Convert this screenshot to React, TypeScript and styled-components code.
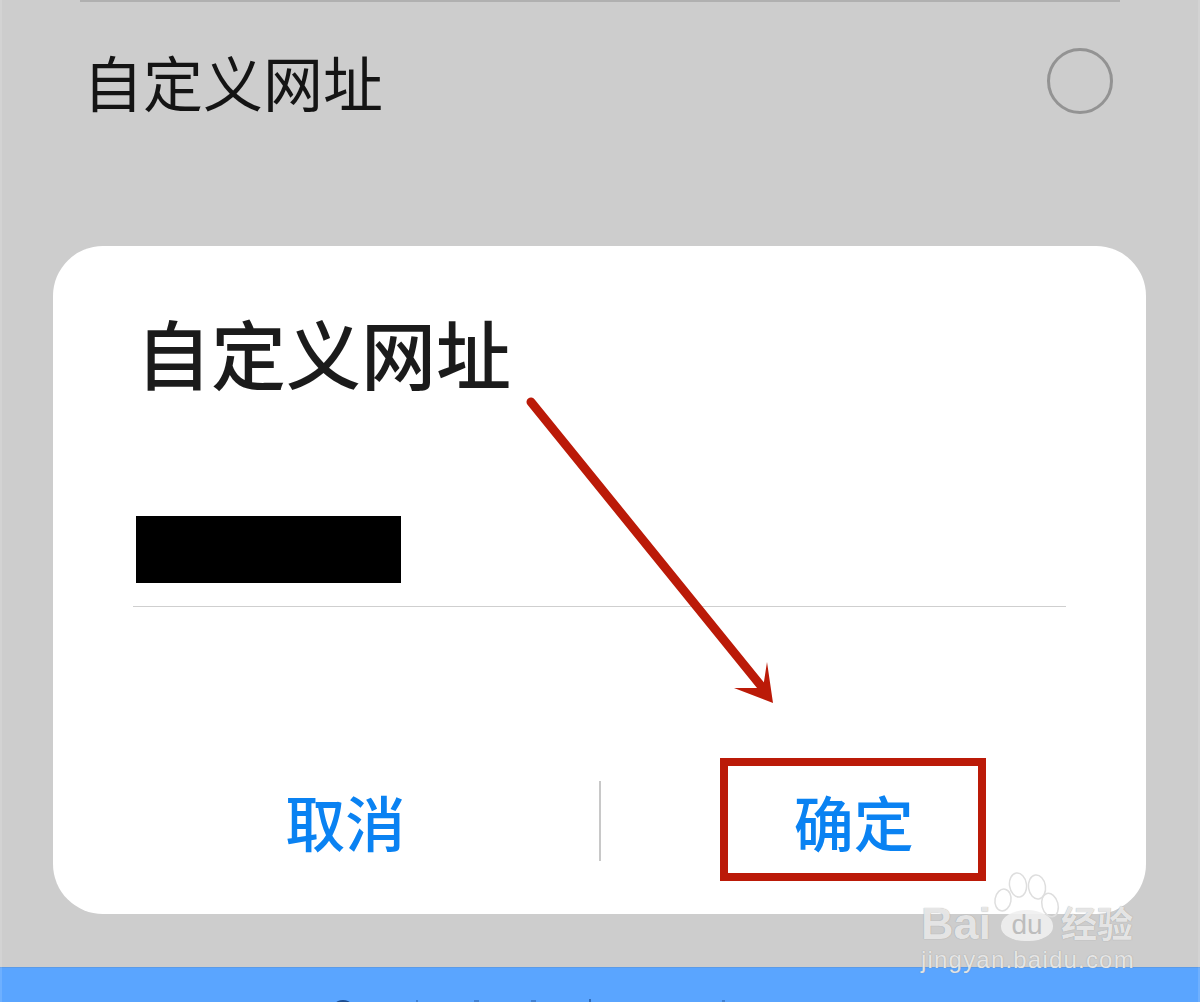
import styled, { createGlobalStyle } from "styled-components";

const GlobalStyle = createGlobalStyle`
	html, body {
		margin: 0;
		padding: 0;
	}

	body {
		font-family: "Noto Sans CJK SC", "Liberation Sans", sans-serif;
	}
`;

const Screen = styled.div`
	position: relative;
	width: 1200px;
	height: 1002px;
	overflow: hidden;
	background: #cdcdcd;
	display: flex;
	flex-direction: column;

	&::after {
		content: "";
		position: absolute;
		inset: 0;
		border-left: 2px solid rgba(255, 255, 255, 0.12);
		border-right: 2px solid rgba(255, 255, 255, 0.12);
		pointer-events: none;
	}
`;

const OptionSection = styled.section`
	height: 246px;
	padding: 0 80px;
	box-sizing: border-box;
`;

const TopRule = styled.div`
	height: 2px;
	background: #b0b0b0;
`;

const OptionRow = styled.div`
	display: flex;
	align-items: center;
	justify-content: space-between;
	height: 160px;
	padding: 0 7px 2px 3px;
	box-sizing: border-box;
`;

const OptionLabel = styled.span`
	font-size: 60px;
	line-height: 1;
	color: #141414;
`;

const Radio = styled.span`
	width: 66px;
	height: 66px;
	box-sizing: border-box;
	border: 3px solid #939393;
	border-radius: 50%;
`;

const Dialog = styled.section`
	margin: 0 54px 0 53px;
	height: 668px;
	padding: 67px 80px 0;
	box-sizing: border-box;
	background: #fff;
	border-radius: 50px;
	display: flex;
	flex-direction: column;
`;

const DialogTitle = styled.h2`
	margin: 0 0 0 3px;
	font-size: 75px;
	line-height: 78px;
	font-weight: 500;
	color: #1b1b1b;
`;

const RedactedValue = styled.div`
	margin: 125px 0 0 3px;
	width: 265px;
	height: 67px;
	background: #000;
`;

const InputRule = styled.div`
	margin-top: 23px;
	height: 1px;
	background: #cfcfcf;
`;

const Actions = styled.div`
	margin: 174px -41px 0;
	display: flex;
	align-items: center;
	height: 80px;
`;

const ActionButton = styled.button`
	flex: 1;
	border: 0;
	padding: 0;
	background: none;
	font-family: inherit;
	font-size: 60px;
	line-height: 80px;
	font-weight: 500;
	color: #0a82f2;
`;

const ActionDivider = styled.div`
	width: 2px;
	height: 80px;
	background: #c8c8c8;
`;

const BottomBar = styled.div`
	position: relative;
	margin-top: 53px;
	flex: 1;
	background: #5aa5ff;
	border-top: 1px solid #5b9be8;
`;

const CroppedGlyphTops = styled.svg`
	position: absolute;
	left: 330px;
	bottom: 0;
`;

const Highlight = styled.div`
	position: absolute;
	left: 720px;
	top: 758px;
	width: 266px;
	height: 123px;
	box-sizing: border-box;
	border: 8px solid #bb1a08;
`;

const ArrowSvg = styled.svg`
	position: absolute;
	left: 500px;
	top: 380px;
`;

const Watermark = styled.div`
	position: absolute;
	left: 921px;
	top: 872px;
	width: 220px;
	color: rgba(240, 240, 240, 0.9);
	text-shadow: 0 0 1px rgba(130, 130, 130, 0.8);
`;

const WatermarkBrand = styled.div`
	display: flex;
	align-items: center;
	height: 70px;
	padding-top: 32px;
	box-sizing: border-box;
	font-family: "Liberation Sans", sans-serif;
	font-size: 45px;
	font-weight: 700;
	line-height: 1;
`;

const PawBody = styled.span`
	display: flex;
	align-items: center;
	justify-content: center;
	flex: none;
	width: 52px;
	height: 31px;
	margin: 4px 8px 0 10px;
	border-radius: 50% 50% 46% 46%;
	background: rgba(240, 240, 240, 0.9);
	color: #bdbdbd;
	text-shadow: none;
	font-size: 28px;
	font-weight: 400;
`;

const WatermarkCn = styled.span`
	margin-top: -2px;
	font-family: "Noto Sans CJK SC", sans-serif;
	font-size: 36px;
	font-weight: 700;
`;

const WatermarkUrl = styled.div`
	margin-top: 4px;
	font-family: "Liberation Sans", sans-serif;
	font-size: 24px;
	letter-spacing: 1.2px;
	line-height: 28px;
	white-space: nowrap;
`;

const PawToes = styled.svg`
	position: absolute;
	left: 70px;
	top: 0;
`;

const App = () => {
	return (
		<Screen>
			<GlobalStyle />
			<OptionSection>
				<TopRule />
				<OptionRow>
					<OptionLabel>自定义网址</OptionLabel>
					<Radio />
				</OptionRow>
			</OptionSection>
			<Dialog>
				<DialogTitle>自定义网址</DialogTitle>
				<RedactedValue />
				<InputRule />
				<Actions>
					<ActionButton>取消</ActionButton>
					<ActionDivider />
					<ActionButton>确定</ActionButton>
				</Actions>
			</Dialog>
			<BottomBar>
				<CroppedGlyphTops width="410" height="3" viewBox="0 0 410 3">
					<ellipse cx="13" cy="4" rx="7" ry="3" fill="#1d4f93" />
					<rect x="86" y="1" width="2" height="2" fill="#3f7fd0" />
					<rect x="144" y="1" width="5" height="2" fill="#3f7fd0" />
					<rect x="201" y="1" width="5" height="2" fill="#3f7fd0" />
					<rect x="259" y="0" width="2" height="3" fill="#2f6bb8" />
					<rect x="392" y="1" width="3" height="2" fill="#3f7fd0" />
				</CroppedGlyphTops>
			</BottomBar>
			<Highlight />
			<ArrowSvg width="300" height="340" viewBox="0 0 300 340">
				<line x1="31" y1="22" x2="266" y2="312" stroke="#bb1a08" strokeWidth="9" strokeLinecap="round" />
				<path d="M273 323 L234 308 L263 308 L267 282 Z" fill="#bb1a08" />
			</ArrowSvg>
			<Watermark>
				<PawToes width="70" height="50" viewBox="0 0 70 50" fill="none" stroke="#dedede" strokeWidth="1.5">
					<ellipse cx="12" cy="28" rx="8" ry="11" transform="rotate(10 12 28)" />
					<ellipse cx="27" cy="13" rx="8.5" ry="12" transform="rotate(-8 27 13)" />
					<ellipse cx="46" cy="15" rx="8.5" ry="12" transform="rotate(-8 46 15)" />
					<ellipse cx="59" cy="33" rx="8" ry="12" transform="rotate(-15 59 33)" />
				</PawToes>
				<WatermarkBrand>
					Bai
					<PawBody>du</PawBody>
					<WatermarkCn>经验</WatermarkCn>
				</WatermarkBrand>
				<WatermarkUrl>jingyan.baidu.com</WatermarkUrl>
			</Watermark>
		</Screen>
	);
};

export default App;
